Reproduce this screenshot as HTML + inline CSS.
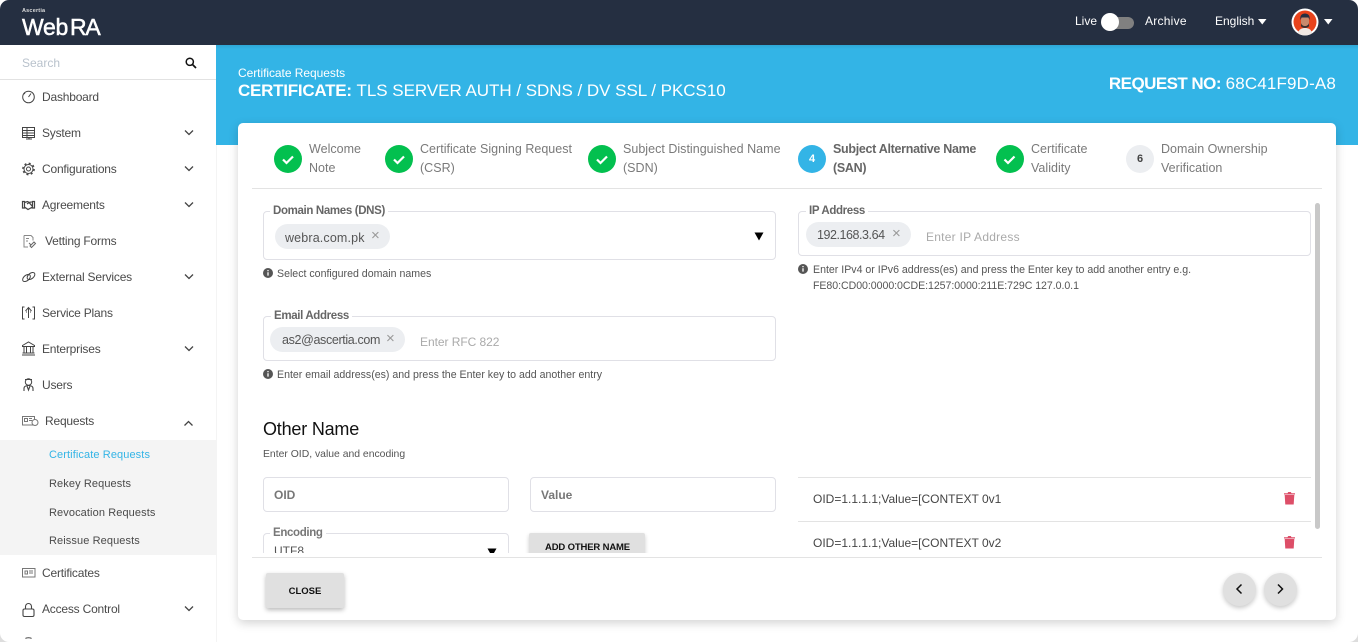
<!DOCTYPE html>
<html><head><meta charset="utf-8">
<style>
*{box-sizing:border-box}
html,body{margin:0;padding:0;width:1358px;height:642px;overflow:hidden;background:#fff}
body{font-family:"Liberation Sans",sans-serif;position:relative}
.t{position:absolute;white-space:nowrap;line-height:20px;height:20px}
.a{position:absolute}
.m{font-size:12px;color:#4a4a4a;letter-spacing:-.2px}
.s{font-size:11px;color:#4a4a4a;letter-spacing:.1px}
.st{font-size:12.5px;color:#7a7a7a;letter-spacing:.02px}
.lg{font-size:11.5px;font-weight:bold;color:#666;background:#fff;padding:0 3px;letter-spacing:-.35px}
.box{position:absolute;border:1px solid #e0e0e6;border-radius:4px;background:#fff}
.chip{position:absolute;height:25px;border-radius:13px;background:#eceef1}
.ct{font-size:12.5px;color:#555}
.x{font-size:15px;color:#999}
.ph{font-size:12px;color:#aaa;letter-spacing:.1px}
.h{font-size:10.6px;color:#555}
.circ{position:absolute;width:28px;height:28px;border-radius:50%;top:145px;text-align:center;line-height:28px;font-size:11px;font-weight:bold}
.g{background:#03c04f}
svg{position:absolute;overflow:visible}
.ic{fill:none;stroke:#444;stroke-width:1}
</style></head><body>

<!-- top bar -->
<div class="a" style="left:0;top:0;width:1358px;height:45px;background:#252f41"></div>
<div class="t" style="left:22px;top:1px;font-size:5.500px;font-weight:bold;color:#ddd;letter-spacing:.2px">Ascertia</div>
<div class="t" style="left:22px;top:15px;font-size:23px;color:#fff;letter-spacing:-.3px;line-height:24px;height:24px;-webkit-text-stroke:.5px #fff">Web<span style="margin-left:2px;letter-spacing:-1.2px">RA</span></div>
<div class="t" style="left:1075px;top:11px;font-size:12px;color:#fff">Live</div>
<div class="a" style="left:1102px;top:17px;width:32px;height:12px;border-radius:6px;background:#808080"></div>
<div class="a" style="left:1101px;top:13px;width:18px;height:18px;border-radius:50%;background:#fff"></div>
<div class="t" style="left:1145px;top:11px;font-size:12px;color:#fff;letter-spacing:.25px">Archive</div>
<div class="t" style="left:1215px;top:11px;font-size:12px;color:#fff">English</div>
<svg style="left:0;top:0" width="1358" height="45">
<path d="M1258 19h8.500l-4.250 5.500z" fill="#fff"/>
<path d="M1324 19h8.500l-4.250 5.500z" fill="#fff"/>
<circle cx="1305" cy="22" r="13.5" fill="#fff"/>
<circle cx="1305" cy="22" r="11.5" fill="#e8431c"/>
<path d="M1298 33c1-4 4-5 7-5s6 1 7 5a11.5 11.5 0 0 1-14 0z" fill="#f1e9e4"/>
<rect x="1301" y="16" width="8" height="11" rx="3.5" fill="#c98a6c"/>
<path d="M1300.500 20c-1-5 2-6.500 4.500-6.500s5.500 1.500 4.500 6.500l-1-2.500h-7z" fill="#252f41"/>
<path d="M1301 23c1 4 7 4 8 0v3c-1 2.500-7 2.500-8 0z" fill="#3a3030"/>
</svg>

<!-- blue banner -->
<div class="a" style="left:216px;top:45px;width:1142px;height:100px;background:#33b4e6"></div>
<div class="a" style="left:0;top:45px;width:1358px;height:4px;background:linear-gradient(#2a9ac7,rgba(51,180,230,0));opacity:.5"></div>
<div class="t" style="left:238px;top:63px;font-size:12px;color:#fff;letter-spacing:-.05px">Certificate Requests</div>
<div class="t" style="left:238px;top:81px;font-size:17px;color:#fff"><b style="letter-spacing:-.25px">CERTIFICATE:</b> <span style="letter-spacing:-.03px">TLS SERVER AUTH / SDNS / DV SSL / PKCS10</span></div>
<div class="t" style="right:22px;top:74px;font-size:17px;color:#fff"><b style="letter-spacing:-.55px">REQUEST NO:</b> <span style="letter-spacing:.15px">68C41F9D-A8</span></div>

<!-- sidebar -->
<div class="a" style="left:0;top:45px;width:216px;height:597px;background:#fff"></div>
<div class="a" style="left:216px;top:145px;width:1px;height:497px;background:#f4f4f4"></div>
<div class="t" style="left:22px;top:53px;font-size:12px;color:#b9c2cc">Search</div>
<svg style="left:185px;top:57px" width="12" height="12"><circle cx="4.800" cy="4.800" r="3.600" fill="none" stroke="#111" stroke-width="1.500"/><path d="M7.500 7.500l3.500 3.500" stroke="#111" stroke-width="1.700"/></svg>
<div class="a" style="left:0;top:79px;width:216px;height:1px;background:#e2e2e2"></div>

<div class="a" style="left:0;top:440px;width:216px;height:115px;background:#f4f4f4"></div>

<div class="t m" style="left:42px;top:87px">Dashboard</div>
<div class="t m" style="left:42px;top:123px">System</div>
<div class="t m" style="left:42px;top:159px">Configurations</div>
<div class="t m" style="left:42px;top:195px">Agreements</div>
<div class="t m" style="left:45px;top:231px">Vetting Forms</div>
<div class="t m" style="left:42px;top:267px">External Services</div>
<div class="t m" style="left:42px;top:303px">Service Plans</div>
<div class="t m" style="left:42px;top:339px">Enterprises</div>
<div class="t m" style="left:42px;top:375px">Users</div>
<div class="t m" style="left:45px;top:411px">Requests</div>
<div class="t s" style="left:49px;top:445px;color:#33b4e6">Certificate Requests</div>
<div class="t s" style="left:49px;top:474px">Rekey Requests</div>
<div class="t s" style="left:49px;top:503px">Revocation Requests</div>
<div class="t s" style="left:49px;top:531px">Reissue Requests</div>
<div class="t m" style="left:42px;top:563px">Certificates</div>
<div class="t m" style="left:42px;top:599px">Access Control</div>

<svg style="left:0;top:0" width="217" height="642">
<!-- chevrons -->
<g fill="none" stroke="#444" stroke-width="1.300">
<path d="M185 130.500l4 4 4-4"/><path d="M185 166.500l4 4 4-4"/><path d="M185 202.500l4 4 4-4"/><path d="M185 274.500l4 4 4-4"/><path d="M185 346.500l4 4 4-4"/><path d="M185 606.500l4 4 4-4"/>
<path d="M184.500 425.500l4-4 4 4"/>
</g>
<g class="ic">
<!-- dashboard -->
<circle cx="28.500" cy="97" r="5.800"/><path d="M28.500 97l2.500-3.500M24 93l1 1"/>
<!-- system -->
<path d="M22.500 127.500h12v10h-12zM22.500 130.500h12M22.500 133h12M22.500 135.500h12M27 127.500v10M26 139h6M29 137.500v1.500"/>
<!-- config -->
<circle cx="28.500" cy="169" r="2"/>
<circle cx="28.500" cy="169" r="4.500"/>
<circle cx="28.500" cy="169" r="5.600" stroke-width="1.500" stroke-dasharray="2 2.400"/>
<!-- agreements -->
<path d="M22.500 201.500v6.500h2v-6.500zM34.500 201.500v6.500h-2v-6.500zM24.500 202.500l3-1 2 1 3-1M24.500 207l3.500 2.500 4.500-2.500M27 204l2-1.500 3.500 4" stroke-width="1.200"/>
<!-- vetting -->
<path d="M24 235.500h7l2 2v3M24 235.500v11.500h4M26 238.500h3M26 241h2" stroke="#888"/><path d="M30 246l4-4 1.500 1.500-4 4zM29 243l2 2" stroke="#666"/>
<!-- external -->
<ellipse cx="26.500" cy="278" rx="4.500" ry="2.700" transform="rotate(-40 26.500 278)"/>
<ellipse cx="31" cy="276" rx="4.500" ry="2.700" transform="rotate(-40 31 276)"/>
<!-- plans -->
<path d="M24.500 307h-2v12h2M32.500 307h2v12h-2M28.500 318v-9.500M25.500 311l3-3.500 3 3.500M27 312h-1M31 312h-1"/>
<!-- enterprises -->
<path d="M22.500 345.500l6-3.500 6 3.500v1h-12zM24 346.500v6M26.500 347v6M30.500 347v6M33 346.500v6M22.500 353h12M22 355h13"/>
<!-- users -->
<circle cx="28.500" cy="382" r="3.200"/><path d="M25 379.500h7M24 391v-2.500c0-2 2-3 4.500-3s4.500 1 4.500 3v2.500M27 386l1.500 4 1.500-4" stroke-width="1.100"/>
<!-- requests -->
<path d="M22.500 416.500h12v8.500h-12zM24.500 418.500h3v3h-3zM29 418.500h3M29 420.500h3" stroke="#777"/><circle cx="35" cy="422.500" r="3" fill="#fff" stroke="#777"/>
<!-- certs -->
<path d="M22.500 568.500h12.500v8.500h-12.500zM25 571h2.500v3h-2.500zM29 571h4M29 573h4" stroke="#777"/>
<!-- lock -->
<rect x="23" y="609" width="11" height="7.500" rx="1.500" stroke-width="1.100"/><path d="M25.500 609v-2.500a3 3 0 0 1 6 0v2.500" stroke-width="1.100"/>
<path d="M25.500 638.500c1-1 5-1 6 0" stroke-width="1.100"/>
</g>
</svg>

<!-- card -->
<div class="a" style="left:238px;top:123px;width:1098px;height:497px;background:#fff;border-radius:5px;box-shadow:0 3px 10px rgba(0,0,0,.18)"></div>

<!-- stepper -->
<div class="circ g" style="left:274px"></div>
<div class="circ g" style="left:385px"></div>
<div class="circ g" style="left:588px"></div>
<div class="circ" style="left:798px;background:#33b4e6;color:#fff">4</div>
<div class="circ g" style="left:996px"></div>
<div class="circ" style="left:1126px;background:#eceef1;color:#444">6</div>
<svg style="left:0;top:0" width="1358" height="200"><g fill="none" stroke="#fff" stroke-width="2.200">
<path d="M283 159.500l3.500 3.500 6.500-6.500"/><path d="M394 159.500l3.500 3.500 6.500-6.500"/><path d="M597 159.500l3.500 3.500 6.500-6.500"/><path d="M1004.500 159.500l3.500 3.500 6.500-6.500"/></g></svg>

<div class="t st" style="left:309px;top:139px">Welcome</div><div class="t st" style="left:309px;top:158px">Note</div>
<div class="t st" style="left:420px;top:139px">Certificate Signing Request</div><div class="t st" style="left:420px;top:158px">(CSR)</div>
<div class="t st" style="left:623px;top:139px">Subject Distinguished Name</div><div class="t st" style="left:623px;top:158px">(SDN)</div>
<div class="t st" style="left:833px;top:139px;font-weight:bold;color:#666;letter-spacing:-.3px">Subject Alternative Name</div><div class="t st" style="left:833px;top:158px;font-weight:bold;color:#666;letter-spacing:-.3px">(SAN)</div>
<div class="t st" style="left:1031px;top:139px">Certificate</div><div class="t st" style="left:1031px;top:158px">Validity</div>
<div class="t st" style="left:1161px;top:139px">Domain Ownership</div><div class="t st" style="left:1161px;top:158px">Verification</div>
<div class="a" style="left:252px;top:188px;width:1070px;height:1px;background:#e3e3e3"></div>

<!-- scroll content -->
<div class="a" style="left:238px;top:189px;width:1098px;height:364px;overflow:hidden">
<div class="a" style="left:-238px;top:-189px;width:1358px;height:642px">

<div class="box" style="left:263px;top:211px;width:513px;height:49px"></div>
<div class="t lg" style="left:270px;top:201px">Domain Names (DNS)</div>
<div class="chip" style="left:275px;top:224px;width:115px"></div>
<div class="t ct" style="left:285px;top:228px;letter-spacing:.15px">webra.com.pk</div>
<div class="t x" style="left:371px;top:226px">×</div>
<svg style="left:754px;top:232px" width="10" height="9"><path d="M.5 .5h9l-4.500 8z" fill="#000"/></svg>
<svg style="left:263px;top:268px" width="10" height="10"><circle cx="5" cy="5" r="5" fill="#555"/><path d="M5 4.300v3.300M5 2v1.300" stroke="#fff" stroke-width="1.300"/></svg>
<div class="t h" style="left:277px;top:263.500px">Select configured domain names</div>

<div class="box" style="left:263px;top:316px;width:513px;height:45px"></div>
<div class="t lg" style="left:271px;top:306px">Email Address</div>
<div class="chip" style="left:270px;top:327px;width:135px"></div>
<div class="t ct" style="left:282px;top:330px;letter-spacing:-.35px">as2@ascertia.com</div>
<div class="t x" style="left:386px;top:329px">×</div>
<div class="t ph" style="left:420px;top:332px;letter-spacing:-.05px">Enter RFC 822</div>
<svg style="left:263px;top:369px" width="10" height="10"><circle cx="5" cy="5" r="5" fill="#555"/><path d="M5 4.300v3.300M5 2v1.300" stroke="#fff" stroke-width="1.300"/></svg>
<div class="t h" style="left:277px;top:364.500px">Enter email address(es) and press the Enter key to add another entry</div>

<div class="box" style="left:798px;top:211px;width:513px;height:45px"></div>
<div class="t lg" style="left:806px;top:201px">IP Address</div>
<div class="chip" style="left:806px;top:222px;width:105px"></div>
<div class="t ct" style="left:817px;top:225px;letter-spacing:-.45px">192.168.3.64</div>
<div class="t x" style="left:892px;top:224px">×</div>
<div class="t ph" style="left:926px;top:227px;letter-spacing:.25px">Enter IP Address</div>
<svg style="left:798px;top:264px" width="10" height="10"><circle cx="5" cy="5" r="5" fill="#555"/><path d="M5 4.300v3.300M5 2v1.300" stroke="#fff" stroke-width="1.300"/></svg>
<div class="t h" style="left:813px;top:259.500px">Enter IPv4 or IPv6 address(es) and press the Enter key to add another entry e.g.</div>
<div class="t h" style="left:813px;top:275.500px;letter-spacing:-.05px">FE80:CD00:0000:0CDE:1257:0000:211E:729C 127.0.0.1</div>

<div class="t" style="left:263px;top:419px;font-size:18px;color:#111;letter-spacing:-.2px">Other Name</div>
<div class="t h" style="left:263px;top:445px;font-size:10.4px">Enter OID, value and encoding</div>

<div class="box" style="left:263px;top:477px;width:246px;height:35px"></div>
<div class="t" style="left:274px;top:485px;font-size:12px;font-weight:bold;color:#777">OID</div>
<div class="box" style="left:530px;top:477px;width:246px;height:35px"></div>
<div class="t" style="left:541px;top:485px;font-size:12px;font-weight:bold;color:#777">Value</div>

<div class="box" style="left:263px;top:533px;width:246px;height:45px"></div>
<div class="t lg" style="left:270px;top:523px;color:#777">Encoding</div>
<div class="t" style="left:274px;top:541px;font-size:12px;color:#555">UTF8</div>
<svg style="left:487px;top:548px" width="10" height="9"><path d="M.5 .5h9l-4.500 8z" fill="#000"/></svg>
<div class="a" style="left:529px;top:533px;width:116px;height:32px;background:#e0e0e0;border-radius:2px;box-shadow:0 2px 4px rgba(0,0,0,.2)"></div>
<div class="t" style="left:545px;top:538px;font-size:9.500px;font-weight:bold;color:#111;letter-spacing:-.15px">ADD OTHER NAME</div>

<div class="a" style="left:798px;top:477px;width:513px;height:1px;background:#e3e3e3"></div>
<div class="t" style="left:813px;top:489px;font-size:12px;color:#444">OID=1.1.1.1;Value=[CONTEXT 0v1</div>
<div class="a" style="left:798px;top:521px;width:513px;height:1px;background:#e3e3e3"></div>
<div class="t" style="left:813px;top:533px;font-size:12px;color:#444">OID=1.1.1.1;Value=[CONTEXT 0v2</div>
<svg style="left:1283px;top:491px" width="13" height="14"><path d="M1 2.200h11v1.300H1zM4.500 2.200l.7-1.200h2.600l.7 1.200z" fill="#dd4e68"/><path d="M1.700 4h9.600l-.6 9.500H2.300z" fill="#dd4e68"/></svg>
<svg style="left:1283px;top:535px" width="13" height="14"><path d="M1 2.200h11v1.300H1zM4.500 2.200l.7-1.200h2.600l.7 1.200z" fill="#dd4e68"/><path d="M1.700 4h9.600l-.6 9.500H2.300z" fill="#dd4e68"/></svg>
<div class="a" style="left:1315px;top:203px;width:5px;height:326px;background:#c8c8c8;border-radius:3px"></div>
</div></div>

<div class="a" style="left:252px;top:557px;width:1070px;height:1px;background:#e3e3e3"></div>
<div class="a" style="left:266px;top:573px;width:78px;height:35px;background:#e0e0e0;border-radius:2px;box-shadow:0 2px 5px rgba(0,0,0,.28)"></div>
<div class="t" style="left:266px;top:582px;width:78px;text-align:center;font-size:9.500px;font-weight:bold;color:#111">CLOSE</div>
<div class="a" style="left:1223px;top:573px;width:33px;height:33px;border-radius:50%;background:#e0e0e0;box-shadow:0 2px 5px rgba(0,0,0,.22)"></div>
<div class="a" style="left:1264px;top:573px;width:33px;height:33px;border-radius:50%;background:#e0e0e0;box-shadow:0 2px 5px rgba(0,0,0,.22)"></div>
<svg style="left:0;top:0" width="1358" height="642"><g fill="none" stroke="#111" stroke-width="1.500"><path d="M1241.500 584.500l-4.500 4.500 4.500 4.500"/><path d="M1278 584.500l4.500 4.500-4.500 4.500"/></g>
<!-- window corners -->
<path d="M0 0h9a9 9 0 0 0-9 9z" fill="#fff"/><path d="M1358 0h-9a9 9 0 0 1 9 9z" fill="#fff"/>
<path d="M0 642h9a9 9 0 0 1-9-9z" fill="#ddd"/><path d="M1358 642h-9a9 9 0 0 0 9-9z" fill="#ddd"/></svg>
</body></html>
